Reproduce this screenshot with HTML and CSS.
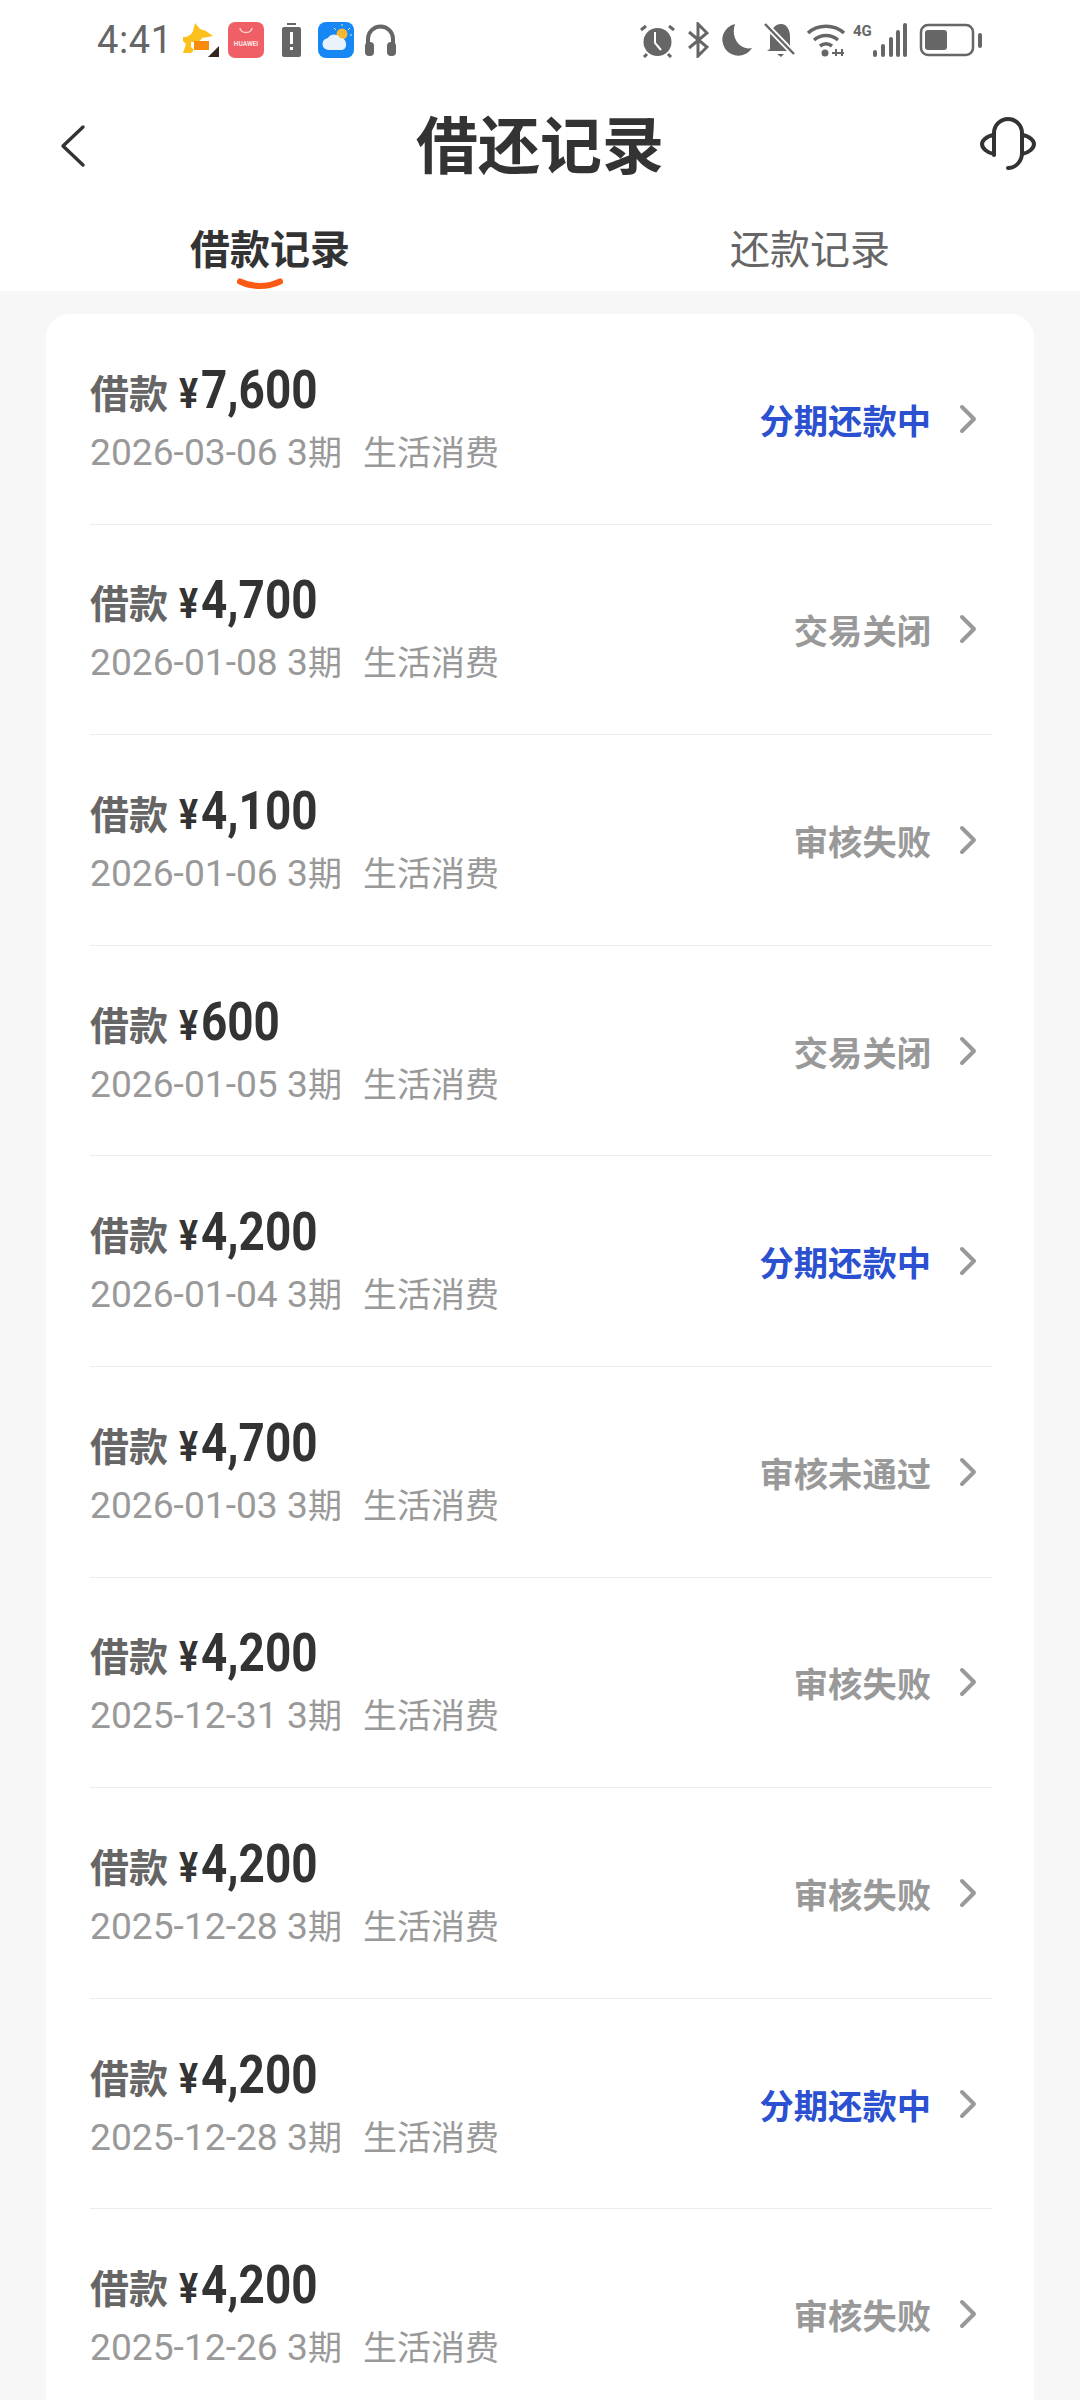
FILE: index.html
```html
<!DOCTYPE html>
<html lang="zh-CN">
<head>
<meta charset="utf-8">
<title>借还记录</title>
<link rel="stylesheet" href="styles.css">
</head>
<body>
<div class="page">
  <header class="top">
    <div class="status">
      <div class="status-left">
        <span class="time">4:41</span>
        <svg class="ic" width="36" height="36" viewBox="0 0 36 36"><path d="M0 15c5 0 8-2 10-6l2-8 5 6 6 2 7 5-5 1-6 1-3 4H8v5l3 3-3 3H0l3-9-3-3z" fill="#fbc01c"/><path d="M11 19h15v9H11z" fill="#f98a0c"/><path d="M25 36l11-11v11z" fill="#32261f" transform="translate(0 -1)"/></svg>
        <svg class="ic" width="36" height="36" viewBox="0 0 36 36"><rect width="36" height="36" rx="7" fill="#ef5f65"/><path d="M12 6c1 6 11 6 12 0" fill="none" stroke="#fbd4d4" stroke-width="1.5"/><text x="18" y="24" class="hw">HUAWEI</text></svg>
        <svg class="ic gap-l" width="19" height="36" viewBox="0 0 19 36"><rect x="5" y="1" width="9" height="2" fill="#666"/><rect y="5" width="19" height="30" rx="2" fill="#666"/><rect x="8" y="10" width="3" height="12" fill="#fff"/><rect x="8" y="25" width="3" height="3" fill="#fff"/></svg>
        <svg class="ic gap-m" width="36" height="36" viewBox="0 0 36 36"><rect width="36" height="36" rx="8" fill="#1787f5"/><circle cx="24" cy="12" r="5.5" fill="#f7b733"/><path d="M24 2v2M32 6l-2 2M16 6l2 2M34 13h-2" stroke="#f7e5b0" stroke-width="1"/><path d="M11 28a6 6 0 0 1-1-12c2-4 9-5 12 0 7-1 9 12 1 12z" fill="#e9f2fb"/></svg>
        <svg class="ic gap-s" width="31" height="36" viewBox="0 0 31 36"><path d="M3 25V17a12.500 12.500 0 0 1 25 0v8" fill="none" stroke="#666" stroke-width="4"/><rect x="0" y="20" width="9" height="14" rx="4" fill="#666"/><rect x="22" y="20" width="9" height="14" rx="4" fill="#666"/></svg>
      </div>
      <div class="status-right">
        <svg class="ic" width="35" height="36" viewBox="0 0 35 36"><circle cx="17.500" cy="20" r="14" fill="#666"/><path d="M15 10v11l6 7" fill="none" stroke="#fff" stroke-width="2"/><path d="M1 8l5-4M34 8l-5-4M7 32l-3 3M28 32l3 3" stroke="#666" stroke-width="3"/></svg>
        <svg class="ic" width="22" height="36" viewBox="0 0 22 36"><path d="M2 10l18 15-9 9V2l9 9L2 26" fill="none" stroke="#666" stroke-width="3"/></svg>
        <svg class="ic" width="31" height="36" viewBox="0 0 31 36"><path d="M14 2a16 16 0 1 0 17 24C20 29 9 17 14 2z" fill="#666"/></svg>
        <svg class="ic" width="32" height="36" viewBox="0 0 32 36"><path d="M6 27V15C6 8 11 2 17 2s9 6 9 13v12l3 2H3z" fill="#666"/><path d="M13 32h7l-3 3z" fill="#666"/><path d="M1 2l29 30" stroke="#fff" stroke-width="6"/><path d="M1 2l29 30" stroke="#666" stroke-width="2.500"/></svg>
        <svg class="ic wifi" width="40" height="36" viewBox="0 0 40 36"><path d="M2 11c10-9 26-9 36 0M8 18c7-6 17-6 24 0M14 24c4-3 8-3 12 0" fill="none" stroke="#666" stroke-width="3.500"/><circle cx="19" cy="31" r="3.500" fill="#666"/><path d="M30 34v-7M36 34v-7M26 31h12" stroke="#666" stroke-width="2"/></svg>
        <div class="signal">
          <span class="net">4G</span>
          <svg class="bars" width="35" height="36" viewBox="0 0 35 36"><path d="M3 33v-3M11 33v-9M19 33v-16M26 33v-23M33 33V3" fill="none" stroke="#666" stroke-width="4" stroke-linecap="round"/></svg>
        </div>
        <svg class="ic" width="64" height="36" viewBox="0 0 64 36"><rect x="2" y="3" width="52" height="30" rx="7" fill="none" stroke="#666" stroke-width="2.500"/><rect x="6" y="8" width="22" height="20" rx="3" fill="#666"/><rect x="59" y="11" width="4" height="15" rx="2" fill="#666"/></svg>
      </div>
    </div>
    <nav class="bar">
      <svg class="back" width="26" height="44" viewBox="0 0 26 44"><path d="M23 3L3 22l20 19" fill="none" stroke="#333" stroke-width="3.400" stroke-linecap="round" stroke-linejoin="round"/></svg>
      <h1 class="title">借还记录</h1>
      <svg class="help" width="56" height="56" viewBox="0 0 56 56"><path d="M14 39V17a14 14 0 0 1 28 0v20c0 8-6 15-14 15" fill="none" stroke="#333" stroke-width="4" stroke-linecap="round"/><path d="M14 19C6 20 2 25 2 28c0 4 5 9 12 10M42 19c8 1 12 6 12 9 0 4-5 9-12 10" fill="none" stroke="#333" stroke-width="4" stroke-linecap="round"/></svg>
    </nav>
    <div class="tabs">
      <div class="tab tab-active">借款记录<svg class="smile" width="46" height="13" viewBox="0 0 46 13"><path d="M3 3.500c12 6 28 6 40 0" fill="none" stroke="#fa5a14" stroke-width="6" stroke-linecap="round"/></svg></div>
      <div class="tab">还款记录</div>
    </div>
  </header>
  <main class="list-wrap">
    <section class="card">
      <article class="row">
        <div class="info"><div class="amount"><span class="lbl">借款</span><span class="yen">¥</span><span class="num">7,600</span></div><div class="meta"><span class="date">2026-03-06 3</span>期<span class="cat">生活消费</span></div></div>
        <div class="state blue">分期还款中</div><svg class="chev" width="18" height="30" viewBox="0 0 18 30"><path d="M3 3l12 12L3 27" fill="none" stroke="#999" stroke-width="4" stroke-linecap="round" stroke-linejoin="round"/></svg>
      </article>
      <article class="row">
        <div class="info"><div class="amount"><span class="lbl">借款</span><span class="yen">¥</span><span class="num">4,700</span></div><div class="meta"><span class="date">2026-01-08 3</span>期<span class="cat">生活消费</span></div></div>
        <div class="state">交易关闭</div><svg class="chev" width="18" height="30" viewBox="0 0 18 30"><path d="M3 3l12 12L3 27" fill="none" stroke="#999" stroke-width="4" stroke-linecap="round" stroke-linejoin="round"/></svg>
      </article>
      <article class="row">
        <div class="info"><div class="amount"><span class="lbl">借款</span><span class="yen">¥</span><span class="num">4,100</span></div><div class="meta"><span class="date">2026-01-06 3</span>期<span class="cat">生活消费</span></div></div>
        <div class="state">审核失败</div><svg class="chev" width="18" height="30" viewBox="0 0 18 30"><path d="M3 3l12 12L3 27" fill="none" stroke="#999" stroke-width="4" stroke-linecap="round" stroke-linejoin="round"/></svg>
      </article>
      <article class="row">
        <div class="info"><div class="amount"><span class="lbl">借款</span><span class="yen">¥</span><span class="num">600</span></div><div class="meta"><span class="date">2026-01-05 3</span>期<span class="cat">生活消费</span></div></div>
        <div class="state">交易关闭</div><svg class="chev" width="18" height="30" viewBox="0 0 18 30"><path d="M3 3l12 12L3 27" fill="none" stroke="#999" stroke-width="4" stroke-linecap="round" stroke-linejoin="round"/></svg>
      </article>
      <article class="row">
        <div class="info"><div class="amount"><span class="lbl">借款</span><span class="yen">¥</span><span class="num">4,200</span></div><div class="meta"><span class="date">2026-01-04 3</span>期<span class="cat">生活消费</span></div></div>
        <div class="state blue">分期还款中</div><svg class="chev" width="18" height="30" viewBox="0 0 18 30"><path d="M3 3l12 12L3 27" fill="none" stroke="#999" stroke-width="4" stroke-linecap="round" stroke-linejoin="round"/></svg>
      </article>
      <article class="row">
        <div class="info"><div class="amount"><span class="lbl">借款</span><span class="yen">¥</span><span class="num">4,700</span></div><div class="meta"><span class="date">2026-01-03 3</span>期<span class="cat">生活消费</span></div></div>
        <div class="state">审核未通过</div><svg class="chev" width="18" height="30" viewBox="0 0 18 30"><path d="M3 3l12 12L3 27" fill="none" stroke="#999" stroke-width="4" stroke-linecap="round" stroke-linejoin="round"/></svg>
      </article>
      <article class="row">
        <div class="info"><div class="amount"><span class="lbl">借款</span><span class="yen">¥</span><span class="num">4,200</span></div><div class="meta"><span class="date">2025-12-31 3</span>期<span class="cat">生活消费</span></div></div>
        <div class="state">审核失败</div><svg class="chev" width="18" height="30" viewBox="0 0 18 30"><path d="M3 3l12 12L3 27" fill="none" stroke="#999" stroke-width="4" stroke-linecap="round" stroke-linejoin="round"/></svg>
      </article>
      <article class="row">
        <div class="info"><div class="amount"><span class="lbl">借款</span><span class="yen">¥</span><span class="num">4,200</span></div><div class="meta"><span class="date">2025-12-28 3</span>期<span class="cat">生活消费</span></div></div>
        <div class="state">审核失败</div><svg class="chev" width="18" height="30" viewBox="0 0 18 30"><path d="M3 3l12 12L3 27" fill="none" stroke="#999" stroke-width="4" stroke-linecap="round" stroke-linejoin="round"/></svg>
      </article>
      <article class="row">
        <div class="info"><div class="amount"><span class="lbl">借款</span><span class="yen">¥</span><span class="num">4,200</span></div><div class="meta"><span class="date">2025-12-28 3</span>期<span class="cat">生活消费</span></div></div>
        <div class="state blue">分期还款中</div><svg class="chev" width="18" height="30" viewBox="0 0 18 30"><path d="M3 3l12 12L3 27" fill="none" stroke="#999" stroke-width="4" stroke-linecap="round" stroke-linejoin="round"/></svg>
      </article>
      <article class="row">
        <div class="info"><div class="amount"><span class="lbl">借款</span><span class="yen">¥</span><span class="num">4,200</span></div><div class="meta"><span class="date">2025-12-26 3</span>期<span class="cat">生活消费</span></div></div>
        <div class="state">审核失败</div><svg class="chev" width="18" height="30" viewBox="0 0 18 30"><path d="M3 3l12 12L3 27" fill="none" stroke="#999" stroke-width="4" stroke-linecap="round" stroke-linejoin="round"/></svg>
      </article>
    </section>
  </main>
</div>
</body>
</html>
```
FILE: styles.css
```css
* { box-sizing: border-box; }
html, body { margin: 0; padding: 0; background: #f7f7f7; }
body { font-family: "Noto Sans CJK SC", "Noto Sans", sans-serif; width: 1080px; height: 2400px; overflow: hidden; }
.page { width: 1080px; height: 2400px; overflow: hidden; display: flex; flex-direction: column; }
.top { background: #fff; height: 291px; flex: none; }
.status { height: 80px; padding: 20px 97px 0 97px; display: flex; justify-content: space-between; align-items: flex-start; }
.status-left, .status-right { display: flex; align-items: center; height: 40px; }
.status-left { gap: 9px; }
.status-right { gap: 12px; }
.time { font-family: "Roboto", sans-serif; font-size: 38px; color: #666; line-height: 40px; width: 72px; letter-spacing: 0.6px; margin-right: 5px; white-space: nowrap; }
.ic { flex: none; display: block; }
.gap-l { margin-left: 9px; }
.gap-m { margin-left: 8px; }
.gap-s { margin-left: 2px; }
.wifi { margin: 0 -5px 0 -2px; }
.hw { font: 700 6.5px "Roboto", sans-serif; fill: #fde4e4; text-anchor: middle; }
.signal { position: relative; flex: none; width: 54px; height: 36px; }
.bars { position: absolute; right: 0; top: 0; display: block; }
.net { position: absolute; left: 0; top: 0; font: 700 15px/18px "Roboto", sans-serif; color: #666; }
.bar { height: 134px; padding: 0 0 0 60px; display: flex; align-items: center; position: relative; }
.back { flex: none; margin-top: -2px; }
.title { position: absolute; left: 0; right: 0; top: 0; margin: 0; text-align: center; font-size: 62px; line-height: 125px; font-weight: 700; color: #333; }
.help { position: absolute; right: 44px; top: 36px; }
.tabs { display: flex; height: 77px; }
.tab { flex: none; width: 540px; text-align: center; font-size: 40px; line-height: 54px; color: #666; padding-top: 6px; position: relative; }
.tab-active { font-weight: 700; color: #333; }
.smile { position: absolute; left: 237px; top: 64px; }
.list-wrap { padding: 23px 46px 0; flex: 1; }
.card { background: #fff; border-radius: 24px; padding: 0 42px 0 44px; }
.row { height: 210.6px; display: flex; align-items: center; border-bottom: 1px solid #ececec; padding-right: 15px; }
.info { flex: 1; min-width: 0; }
.amount { display: flex; align-items: baseline; height: 58px; margin-top: -2px; color: #333; }
.lbl { font-size: 39px; line-height: 58px; font-weight: 700; color: #666; }
.yen { font-family: "Roboto", sans-serif; font-size: 42px; font-weight: 700; margin-left: 11px; margin-right: -1px; display: inline-block; transform: scaleX(0.85); transform-origin: left center; }
.num { font-family: "Roboto", sans-serif; font-size: 53px; font-weight: 700; line-height: 58px; display: inline-block; transform: scaleX(0.865); transform-origin: left center; }
.meta { font-size: 34px; line-height: 46px; color: #999; margin-top: 9px; white-space: nowrap; }
.date { font-family: "Roboto", sans-serif; font-size: 37.2px; }
.cat { margin-left: 21px; }
.state { font-size: 34.3px; font-weight: 700; color: #999; white-space: nowrap; margin-right: 28px; }
.blue { color: #2b50d0; }
.chev { flex: none; display: block; }
```
